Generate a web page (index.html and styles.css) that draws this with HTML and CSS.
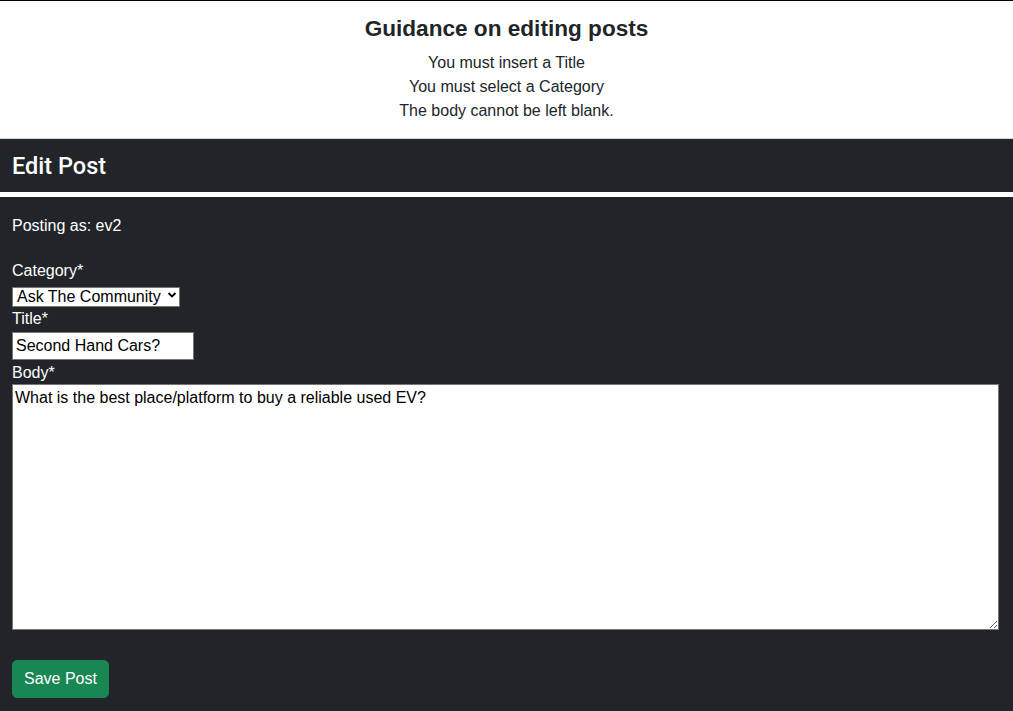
FILE: index.html
```html
<!DOCTYPE html>
<html lang="en">
<head>
<meta charset="utf-8">
<title>Edit Post</title>
<link rel="stylesheet" href="styles.css">
</head>
<body>
<section class="guidance">
  <h2 class="guidance-title">Guidance on editing posts</h2>
  <p class="guidance-line">You must insert a Title</p>
  <p class="guidance-line">You must select a Category</p>
  <p class="guidance-line">The body cannot be left blank.</p>
</section>
<header class="edit-header">
  <h1 class="edit-title">Edit Post</h1>
</header>
<form class="edit-form">
  <p class="posting-as">Posting as: ev2</p>
  <label class="field-label" for="category">Category*</label>
  <div class="select-wrap">
    <select id="category" class="select">
      <option>Ask The Community</option>
    </select>
    <svg class="select-arrow" width="10" height="8" viewBox="0 0 10 8"><path d="M1.5 2 L5 5.5 L8.5 2" fill="none" stroke="#000" stroke-width="1.8"/></svg>
  </div>
  <label class="field-label" for="title">Title*</label>
  <input id="title" class="text-input" type="text" value="Second Hand Cars?">
  <label class="field-label label-body" for="body">Body*</label>
  <textarea id="body" class="textarea">What is the best place/platform to buy a reliable used EV?</textarea>
  <button type="button" class="btn-save">Save Post</button>
</form>
</body>
</html>
```
FILE: styles.css
```css
html, body {
  margin: 0;
  padding: 0;
}
body {
  font-family: "Liberation Sans", Arial, sans-serif;
  font-size: 16px;
  line-height: 24px;
  color: #212529;
  background: #fff;
  height: 711px;
  display: flex;
  flex-direction: column;
  overflow: hidden;
}
.guidance {
  border-top: 1px solid #000;
  text-align: center;
  padding: 14px 0 15px;
  height: 108px;
}
.guidance-title {
  margin: 0 0 8px;
  font-size: 22.6px;
  line-height: 28px;
  font-weight: 700;
}
.guidance-line {
  margin: 0;
}
.edit-header {
  background: #212529;
  color: #fff;
  height: 53px;
  padding: 0 12px;
  display: flex;
  align-items: center;
  border-top: 1px solid #d6d6d6;
}
.edit-title {
  margin: 0;
  font-family: Roboto, "Liberation Sans", Arial, sans-serif;
  font-size: 23.5px;
  font-weight: 500;
  line-height: 28px;
}
.edit-form {
  margin-top: 5px;
  background: #212529;
  color: #fff;
  flex: 1;
  padding: 17px 12px 0 12px;
  display: flex;
  flex-direction: column;
  align-items: flex-start;
}
.posting-as {
  margin: 0 0 21px;
}
.field-label {
  display: block;
}
.label-body {
  margin-top: 1px;
  line-height: 23px;
}
.select-wrap {
  position: relative;
  width: 168px;
  height: 20px;
  margin: 2px 0 2px;
}
.select {
  appearance: none;
  -webkit-appearance: none;
  width: 168px;
  height: 20px;
  box-sizing: border-box;
  border: 1px solid #767676;
  border-radius: 0;
  background: #fff;
  color: #000;
  font-family: "Liberation Sans", Arial, sans-serif;
  font-size: 16px;
  line-height: 18px;
  padding: 0 16px 0 4px;
  margin: 0;
}
.select-arrow {
  position: absolute;
  right: 3px;
  top: 6px;
  pointer-events: none;
}
.text-input {
  width: 182px;
  height: 28px;
  box-sizing: border-box;
  border: 1px solid #767676;
  background: #fff;
  color: #000;
  font-family: "Liberation Sans", Arial, sans-serif;
  font-size: 16px;
  padding: 1px 3px;
  margin: 1px 0 0;
}
.textarea {
  width: 987px;
  height: 246px;
  box-sizing: border-box;
  border: 1px solid #767676;
  background: #fff;
  color: #000;
  font-family: "Liberation Sans", Arial, sans-serif;
  font-size: 16px;
  line-height: 20px;
  padding: 3px 2px;
  margin: 0;
  resize: both;
}
.btn-save {
  margin-top: 30px;
  background: #198754;
  color: #fff;
  border: 1px solid #198754;
  border-radius: 5px;
  font-family: "Liberation Sans", Arial, sans-serif;
  font-size: 16px;
  line-height: 24px;
  padding: 6px 11px;
  cursor: pointer;
}
```
